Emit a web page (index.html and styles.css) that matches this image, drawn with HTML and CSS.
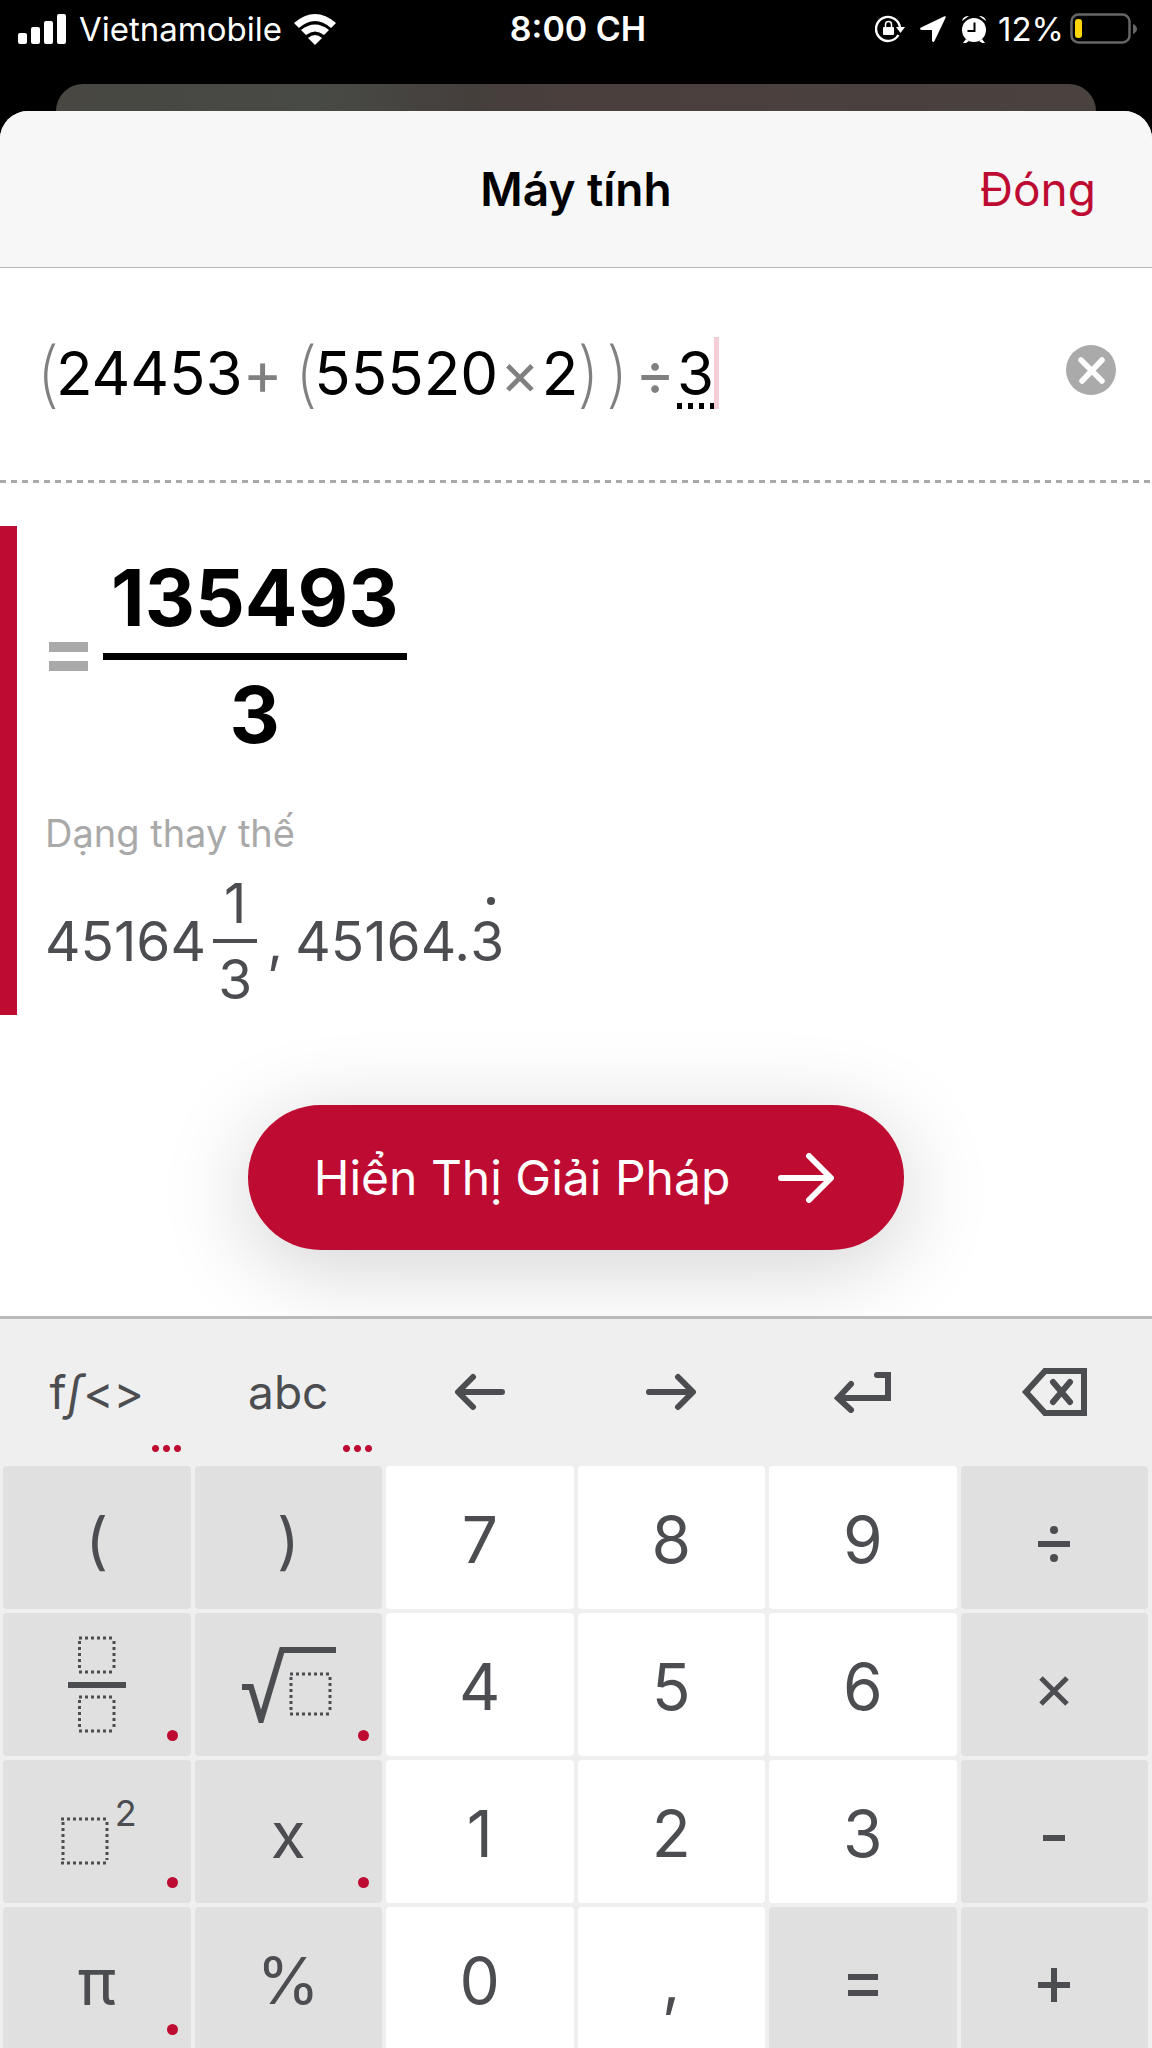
FILE: index.html
```html
<!DOCTYPE html>
<html lang="vi">
<head>
<meta charset="utf-8">
<meta name="viewport" content="width=device-width, initial-scale=1">
<title>Máy tính</title>
<link rel="stylesheet" href="styles.css">
</head>
<body>
<div class="app">
  <div class="status">
    <div class="status-side">
      <svg class="signal" width="49" height="31" viewBox="0 0 49 31" aria-hidden="true"><rect x="0" y="19" width="9" height="11" rx="2"/><rect x="13" y="13" width="9" height="17" rx="2"/><rect x="26" y="7" width="9" height="23" rx="2"/><rect x="39" y="0" width="9" height="30" rx="2"/></svg>
      <span class="carrier">Vietnamobile</span>
      <svg width="42" height="31" viewBox="0 0 42 31" aria-hidden="true"><path d="M0 9Q21-9 42 9L37 14Q21 0 5 14Z"/><path d="M7 16Q21 5 35 16L30 21Q21 14 12 21Z"/><path d="M14 24Q21 18 28 24L21 31Z"/></svg>
    </div>
    <span class="time">8:00 CH</span>
    <div class="status-side status-right">
      <svg width="30" height="28" viewBox="0 0 30 28" aria-hidden="true"><path d="M23.400 20A12 12 0 1 1 25 13" fill="none" stroke="#fff" stroke-width="2.400"/><path d="M21 12h9l-4.500 6Z"/><rect x="8" y="12" width="11" height="8" rx="1"/><path d="M10.500 12V9.500a3 3 0 0 1 6 0V12" fill="none" stroke="#fff" stroke-width="1.500"/></svg>
      <svg width="26" height="26" viewBox="0 0 26 26" aria-hidden="true"><path d="M24.500.300 1 11.500c-1.500.800-1 2.500.500 2.500H12v10.500c0 1.700 1.900 2 2.500.500L25.700 1.500c.400-.900-.300-1.600-1.200-1.200Z"/></svg>
      <svg width="26" height="28" viewBox="0 0 26 28" aria-hidden="true"><circle cx="13" cy="15" r="12"/><path d="M1 6Q2 1 8 1ZM25 6Q24 1 18 1ZM5 24l3 2-3 2H2ZM21 24l-3 2 3 2h3Z"/><path d="M13.500 7.500V16H6.500" fill="none" stroke="#000" stroke-width="2"/></svg>
      <span class="percent">12%</span>
      <svg class="battery" width="68" height="32" viewBox="0 0 68 32" aria-hidden="true"><rect x="1.500" y="1.500" width="58" height="28" rx="7" fill="none" stroke="#666" stroke-width="2.500"/><rect x="5" y="6" width="7" height="19" rx="3" fill="#ffd60a"/><path d="M63 11q4 2 4 5t-4 5Z" fill="#666"/></svg>
    </div>
  </div>
  <div class="behind"></div>
  <main class="sheet">
    <header class="header">
      <h1 class="title">Máy tính</h1>
      <button class="close" type="button">Đóng</button>
    </header>
    <section class="entry">
      <div class="expression" role="textbox" aria-label="Biểu thức" tabindex="0">
        <span class="paren">(</span><span>24453</span><span class="op">+</span><span class="paren paren-after-op">(</span><span>55520</span><span class="op op-tight">×</span><span>2</span><span class="paren paren-close">)</span><span class="paren paren-outer">)</span><span class="op op-divide">÷</span><span class="current">3</span><span class="caret"></span>
      </div>
      <button class="clear" type="button" aria-label="Xóa">
        <svg width="50" height="50" viewBox="0 0 50 50" aria-hidden="true"><circle cx="25" cy="25" r="25" fill="#aaa"/><path d="M15 15l21 21M36 15 16 36" stroke="#fff" stroke-width="5.500" stroke-linecap="round"/></svg>
      </button>
    </section>
    <section class="answer">
      <div class="result">
        <span class="equals" aria-label="="></span>
        <span class="fraction"><span class="numerator">135493</span><span class="denominator">3</span></span>
      </div>
      <h2 class="alt-title">Dạng thay thế</h2>
      <div class="alt">
        <span>45164</span>
        <span class="fraction fraction-small"><span class="numerator">1</span><span class="denominator">3</span></span>
        <span class="comma">,</span>
        <span>45164.</span><span class="repeating">3</span>
      </div>
    </section>
    <div class="action">
      <button class="solve" type="button">
        <span>Hiển Thị Giải Pháp</span>
        <svg width="56" height="50" viewBox="0 0 56 50" aria-hidden="true"><path d="M3 25H52M31 3 53 25 31 47" fill="none" stroke="#fff" stroke-width="6" stroke-linecap="round" stroke-linejoin="round"/></svg>
      </button>
    </div>
  </main>
  <section class="keyboard" aria-label="Bàn phím">
    <div class="tools">
      <button class="tool" type="button">f<i>∫</i>&lt;&gt;<span class="more"></span></button>
      <button class="tool" type="button">abc<span class="more"></span></button>
      <button class="tool" type="button" aria-label="Trái"><svg width="52" height="38" viewBox="0 0 52 38" aria-hidden="true"><path d="M48 19H5M19 4 4 19 19 34"/></svg></button>
      <button class="tool" type="button" aria-label="Phải"><svg width="52" height="38" viewBox="0 0 52 38" aria-hidden="true"><path d="M4 19H47M33 4 48 19 33 34"/></svg></button>
      <button class="tool" type="button" aria-label="Nhập"><svg width="58" height="42" viewBox="0 0 58 42" aria-hidden="true"><path d="M43 4H54V27H5M17 13 4 27 17 39" stroke-linejoin="miter"/></svg></button>
      <button class="tool" type="button" aria-label="Xóa lùi"><svg width="66" height="50" viewBox="0 0 66 50" aria-hidden="true"><path d="M5 25 24 4H63V46H24ZM32 15 49 35M49 15 32 35" stroke-linejoin="miter"/></svg></button>
    </div>
    <div class="keys">
      <button class="key key-gray key-paren" type="button">(</button>
      <button class="key key-gray key-paren" type="button">)</button>
      <button class="key" type="button">7</button>
      <button class="key" type="button">8</button>
      <button class="key" type="button">9</button>
      <button class="key key-gray key-op" type="button" aria-label="÷"><svg width="32" height="36" viewBox="0 0 32 36" aria-hidden="true"><path d="M0 18H32"/><circle cx="16" cy="4" r="4"/><circle cx="16" cy="32" r="4"/></svg></button>
      <button class="key key-gray key-dot" type="button" aria-label="Phân số"><svg width="60" height="98" viewBox="0 0 60 98" aria-hidden="true"><path d="M1 49H59"/><path class="slot" d="M12 2H48M12 36H48M12.500 5V33M47 5V33M12 61H48M12 95H48M12.500 64V92M47 64V92"/></svg></button>
      <button class="key key-gray key-dot" type="button" aria-label="Căn bậc hai"><svg width="96" height="76" viewBox="0 0 96 76" aria-hidden="true"><path d="M2 40H11L21 73 42 3H96"/><path class="slot" d="M50 27H92M50 67H92M51 30V64M90 30V64"/></svg></button>
      <button class="key" type="button">4</button>
      <button class="key" type="button">5</button>
      <button class="key" type="button">6</button>
      <button class="key key-gray key-op" type="button" aria-label="×"><svg width="30" height="30" viewBox="0 0 30 30" aria-hidden="true"><path d="M2 2 28 28M28 2 2 28" stroke-width="5"/></svg></button>
      <button class="key key-gray key-dot" type="button" aria-label="Bình phương"><span class="power"><svg width="48" height="48" viewBox="0 0 48 48" aria-hidden="true"><path class="slot" d="M0 2H48M0 46H48M2 5V43M46 5V43"/></svg><sup>2</sup></span></button>
      <button class="key key-gray key-dot key-letter" type="button">x</button>
      <button class="key" type="button">1</button>
      <button class="key" type="button">2</button>
      <button class="key" type="button">3</button>
      <button class="key key-gray key-op" type="button" aria-label="-"><svg width="22" height="6" viewBox="0 0 22 6" aria-hidden="true"><path d="M0 3H22"/></svg></button>
      <button class="key key-gray key-dot key-letter" type="button">π</button>
      <button class="key key-gray" type="button">%</button>
      <button class="key" type="button">0</button>
      <button class="key" type="button">,</button>
      <button class="key key-gray key-op" type="button" aria-label="="><svg width="30" height="22" viewBox="0 0 30 22" aria-hidden="true"><path d="M0 3H30M0 19H30"/></svg></button>
      <button class="key key-gray key-op" type="button" aria-label="+"><svg width="32" height="34" viewBox="0 0 32 34" aria-hidden="true"><path d="M0 17H32M16 0V34"/></svg></button>
    </div>
  </section>
</div>
</body>
</html>
```
FILE: styles.css
```css
* { box-sizing: border-box; }
body {
  margin: 0;
  background: #000;
  font-family: Inter, "Liberation Sans", sans-serif;
  color: #000;
}
button {
  margin: 0;
  padding: 0;
  border: 0;
  background: none;
  font: inherit;
  color: inherit;
}
svg { display: block; flex: none; }
.app {
  display: flex;
  flex-direction: column;
  height: 100vh;
  overflow: hidden;
}

/* Status bar */
.status {
  flex: none;
  display: grid;
  grid-template-columns: 1fr auto 1fr;
  height: 84px;
  padding: 13px 14px 39px 18px;
  align-items: center;
  color: #fff;
  font-size: 33px;
  line-height: 32px;
}
.status svg { fill: #fff; }
.status-side { display: flex; align-items: center; gap: 12px; }
.status-right { justify-content: flex-end; gap: 15px; }
.time { font-size: 34px; font-weight: 600; }
.percent { margin-left: -4px; }
.battery { margin-left: -9px; }
.behind {
  flex: none;
  height: 27px;
  margin: 0 56px;
  border-radius: 28px 28px 0 0;
  background: linear-gradient(90deg, #484742, #484a45 25%, #453f3c 40%, #4b3f3d 52%, #49423f);
}

/* Sheet */
.sheet {
  flex: none;
  border-radius: 28px 28px 0 0;
  background: #fff;
  overflow: hidden;
}
.header {
  display: grid;
  grid-template-columns: 1fr auto 1fr;
  align-items: center;
  height: 157px;
  padding: 0 56px;
  border-bottom: 1px solid #b5b5b5;
  background: #f7f7f7;
  font-size: 46px;
}
.title {
  grid-column: 2;
  margin: 0;
  font-size: 46px;
  font-weight: 600;
}
.close { justify-self: end; color: #be0b32; }

.entry {
  display: flex;
  justify-content: space-between;
  align-items: flex-start;
  height: 215px;
  padding: 69px 36px 0 40px;
  background: repeating-linear-gradient(90deg, #aaa 0 6px, #fff 6px 11px) left bottom / 100% 3px no-repeat;
}
.expression {
  display: flex;
  height: 72px;
  align-items: center;
  font-size: 60px;
  line-height: 72px;
}
.paren, .op { color: #808080; }
.paren { margin: 0 -4px; font-size: 72px; font-weight: 200; }
.op-tight { margin: 0 2px; }
.paren-after-op { margin-left: 12px; }
.paren-close { margin-left: -2px; }
.paren-outer { margin-left: 9px; }
.op-divide { margin: 0 2px 0 10px; }
.current {
  background: repeating-linear-gradient(90deg, #000 0 5px, #fff 5px 11px) left bottom / 100% 6px no-repeat;
}
.caret { flex: none; width: 5px; height: 72px; background: #f4cdd6; }
.clear { margin-top: 8px; }

/* Answer */
.answer {
  margin-top: 43px;
  height: 489px;
  padding: 32px 28px 0;
  border-left: 17px solid #be0b32;
}
.result { display: flex; align-items: center; gap: 15px; padding-left: 4px; }
.equals {
  width: 39px;
  height: 29px;
  border: solid #a9a9a9;
  border-width: 10px 0;
}
.fraction {
  display: flex;
  flex-direction: column;
  align-items: center;
  font-size: 78px;
  font-weight: 700;
  line-height: 80px;
}
.numerator {
  padding: 0 8px 15px;
  border-bottom: 7px solid #000;
}
.denominator { padding-top: 15px; }
.alt-title {
  margin: 54px 0 0;
  font-size: 38px;
  font-weight: 400;
  line-height: 48px;
  color: #a9a9a9;
}
.alt {
  display: flex;
  align-items: center;
  margin-top: 16px;
  font-size: 55px;
  line-height: 60px;
  color: #4c4d51;
}
.fraction-small {
  margin-left: 7px;
  font-size: 55px;
  font-weight: 400;
  line-height: 60px;
}
.fraction-small .numerator { padding: 0 11px 6px; border-bottom: 4px solid #4c4d51; }
.fraction-small .denominator { padding-top: 6px; }
.comma { margin: 0 12px 0 10px; }
.repeating { position: relative; }
.repeating::before {
  content: "";
  position: absolute;
  top: -14px;
  left: 50%;
  width: 8px;
  height: 8px;
  border-radius: 50%;
  background: #4c4d51;
}

.action { display: flex; justify-content: center; padding: 90px 0 66px; }
.solve {
  display: flex;
  align-items: center;
  gap: 48px;
  height: 145px;
  padding: 0 70px 0 66px;
  border-radius: 73px;
  background: #be0b32;
  box-shadow: 0 16px 90px rgba(0, 0, 0, 0.18);
  color: #fff;
  font-size: 48px;
}

/* Keyboard */
.keyboard {
  position: relative;
  flex: none;
  border-top: 3px solid #bababa;
  background: #efefef;
  color: #4c4d51;
}
.keyboard svg { fill: none; stroke: #4c4d51; stroke-width: 6; }
.keyboard circle { fill: #4c4d51; stroke: none; }
.keyboard .slot { stroke-width: 3; stroke-dasharray: 3; }
.tools, .keys {
  display: grid;
  grid-template-columns: repeat(6, 1fr);
  gap: 4px;
  padding: 0 4px 0 3px;
}
.tool, .key {
  position: relative;
  display: flex;
  align-items: center;
  justify-content: center;
}
.tool { height: 147px; padding-bottom: 2px; font-size: 46px; }
.tool svg { stroke-linecap: round; stroke-linejoin: round; }
.more {
  position: absolute;
  right: 8px;
  bottom: 14px;
  width: 33px;
  height: 7px;
  background: radial-gradient(circle, #be0b32 3px, transparent 4px) left / 11px 7px;
}
.key {
  height: 143px;
  padding-top: 3px;
  border-radius: 4px;
  background: #fff;
  font-size: 64px;
}
.key-gray { background: #e0e0e0; }
.key-op { padding-top: 12px; }
.key-paren { padding-top: 6px; font-size: 62px; }
.key-dot { padding-top: 0; }
.key-letter { padding-top: 6px; }
.key-dot::after {
  content: "";
  position: absolute;
  right: 13px;
  bottom: 15px;
  width: 11px;
  height: 11px;
  border-radius: 50%;
  background: #be0b32;
}
.power { display: flex; align-items: flex-start; padding: 18px 0 0 4px; }
.power sup { margin: -22px 0 0 6px; font-size: 36px; line-height: 36px; }
```
